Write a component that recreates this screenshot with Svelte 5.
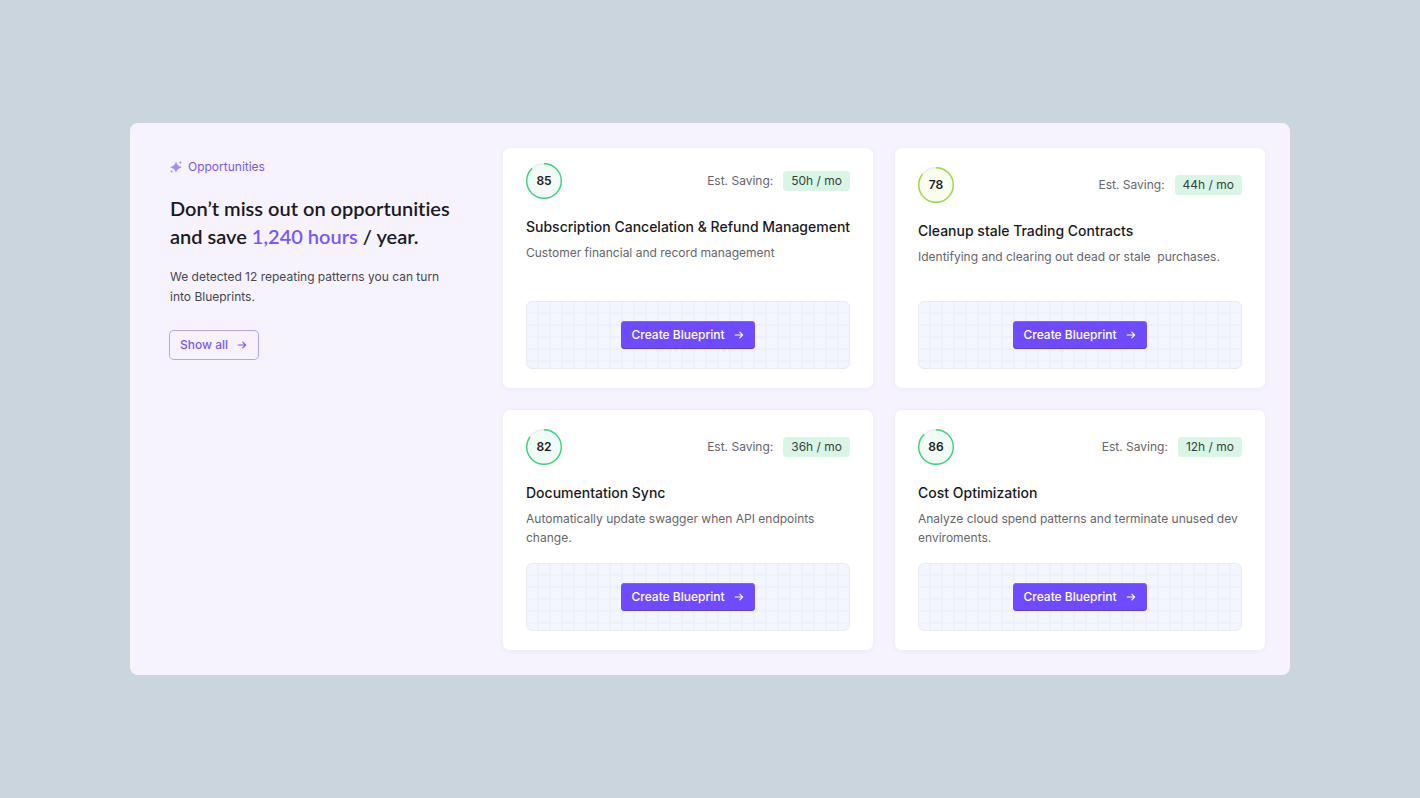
<script>
  const cards = [
    { score: 85, arc: 88, color: '#3dd47e', fill: '#f1fcf7', saving: '50h / mo', title: 'Subscription Cancelation & Refund Management', text: 'Customer financial and record management', compact: true },
    { score: 78, arc: 86, color: '#9bdb3c', fill: '#f9fdf0', saving: '44h / mo', title: 'Cleanup stale Trading Contracts', text: 'Identifying and clearing out dead or stale  purchases.' },
    { score: 82, arc: 85, color: '#3dd47e', fill: '#f1fcf7', saving: '36h / mo', title: 'Documentation Sync', text: 'Automatically update swagger when API endpoints change.' },
    { score: 86, arc: 88, color: '#3dd47e', fill: '#f1fcf7', saving: '12h / mo', title: 'Cost Optimization', text: 'Analyze cloud spend patterns and terminate unused dev enviroments.' },
  ];
</script>

{#snippet arrow()}
  <svg class="arrow" viewBox="0 0 12 12" aria-hidden="true">
    <path d="M2.2 6h7.4M6.8 3.2 9.6 6 6.8 8.8" />
  </svg>
{/snippet}

<main class="page">
  <section class="panel">
    <div class="intro">
      <p class="eyebrow">
        <svg viewBox="0 0 12 12" aria-hidden="true">
          <path d="M6 0.2C7.1 3.9 8.1 5.1 12 6.2 8.1 7.3 7.1 8.5 6 12 4.9 8.5 3.9 7.3 0 6.2 3.9 5.1 4.9 3.9 6 0.2Z" />
          <path d="M10.4 0 10.9 1.1 12 1.6 10.9 2.1 10.4 3.2 9.9 2.1 8.8 1.6 9.9 1.1Z" />
          <circle cx="1.6" cy="10.5" r="1" />
        </svg>
        Opportunities
      </p>
      <h1>Don’t miss out on opportunities<br />and save <span>1,240 hours</span> / year.</h1>
      <p class="lead">We detected 12 repeating patterns you can turn into Blueprints.</p>
      <button class="btn btn-outline">Show all {@render arrow()}</button>
    </div>

    <div class="cards">
      {#each cards as c}
        <article class="card" class:compact={c.compact}>
          <div class="card-header">
            <div class="score">
              <svg viewBox="0 0 36 36" aria-hidden="true">
                <circle cx="18" cy="18" r="17.3" fill={c.fill} stroke="#ececf1" />
                <circle class="ring" cx="18" cy="18" r="17.3" fill="none" stroke={c.color} pathLength="100" stroke-dasharray="{c.arc} 100" />
              </svg>
              <span>{c.score}</span>
            </div>
            <div class="saving">Est. Saving: <span class="badge">{c.saving}</span></div>
          </div>
          <h2>{c.title}</h2>
          <p class="card-text">{c.text}</p>
          <div class="blueprint">
            <button class="btn btn-primary">Create Blueprint {@render arrow()}</button>
          </div>
        </article>
      {/each}
    </div>
  </section>
</main>

<style>
  :global(body) { margin: 0; background: #cad5de; }
  .page { box-sizing: border-box; min-height: 100vh; padding: 24px 130px; display: flex; align-items: center; font-family: Inter, "Liberation Sans", sans-serif; font-size: 12px; line-height: 20px; color: #1a1a1f; }
  h1, h2, p { margin: 0; }
  .panel { flex: 1; display: flex; gap: 40px; padding: 24px 24px 24px 40px; background: #f6f3ff; border-radius: 8px; }
  .intro { flex: 0 0 292px; padding-top: 10px; }
  .eyebrow { display: flex; align-items: center; gap: 6px; color: #7a57f5; }
  .eyebrow svg { width: 12px; height: 12px; fill: #a78bfa; }
  h1 { margin: 17px 0; font-family: Lato, Inter, sans-serif; font-size: 20px; line-height: 28px; font-weight: 600; font-variant-ligatures: none; }
  h1 span { color: #7857ff; }
  .lead { color: #46464f; }

  .btn { display: inline-flex; align-items: center; gap: 8px; height: 28px; padding: 0 10px; border: 0; border-radius: 4px; font: inherit; font-weight: 500; white-space: nowrap; cursor: pointer; }
  .btn-outline { margin-top: 24px; background: transparent; color: #7a57f5; box-shadow: 0 0 0 1px #b5a2fb; }
  .btn-primary { background: #6f4bff; color: #fff; box-shadow: inset 0 1px #8062ff, inset 0 -1px #5c39e6; }
  .arrow { width: 12px; height: 12px; fill: none; stroke: currentColor; stroke-width: 1.1; stroke-linecap: round; stroke-linejoin: round; }

  .cards { flex: 1; min-width: 0; display: grid; grid-template-columns: repeat(2, minmax(0, 1fr)); grid-auto-rows: 1fr; gap: 20px; }
  .card { display: flex; flex-direction: column; padding: 20px 24px; background: #fff; border-radius: 8px; box-shadow: inset 0 0 0 1px #efedf8, 0 1px 4px rgba(90, 60, 200, 0.05); }
  .compact { padding-top: 16px; }
  .card-header { display: flex; justify-content: space-between; align-items: center; }
  .score { display: grid; place-items: center; font-weight: 600; }
  .score svg, .score span { grid-area: 1 / 1; }
  .score svg { width: 36px; height: 36px; stroke-width: 1.4; }
  .ring { transform: rotate(-90deg); transform-origin: center; }
  .saving { display: flex; align-items: center; gap: 10px; color: #66666e; }
  .badge { padding: 0 8px; border-radius: 4px; background: #d8f5e6; color: #37423d; }
  h2 { margin-top: 16px; font-size: 14px; line-height: 24px; font-weight: 500; white-space: nowrap; }
  .card-text { margin-top: 4px; margin-bottom: 16px; line-height: 19px; color: #66666e; white-space: pre-wrap; }
  .blueprint { box-sizing: border-box; min-height: 68px; margin-top: auto; display: flex; align-items: center; justify-content: center; border: 1px solid #e9ebf3; border-radius: 6px; background: repeating-linear-gradient(90deg, transparent 0 10px, #eef0fd 10px 12px), repeating-linear-gradient(transparent 0 10px, #eef0fd 10px 12px), #f3f6fe; }
</style>
